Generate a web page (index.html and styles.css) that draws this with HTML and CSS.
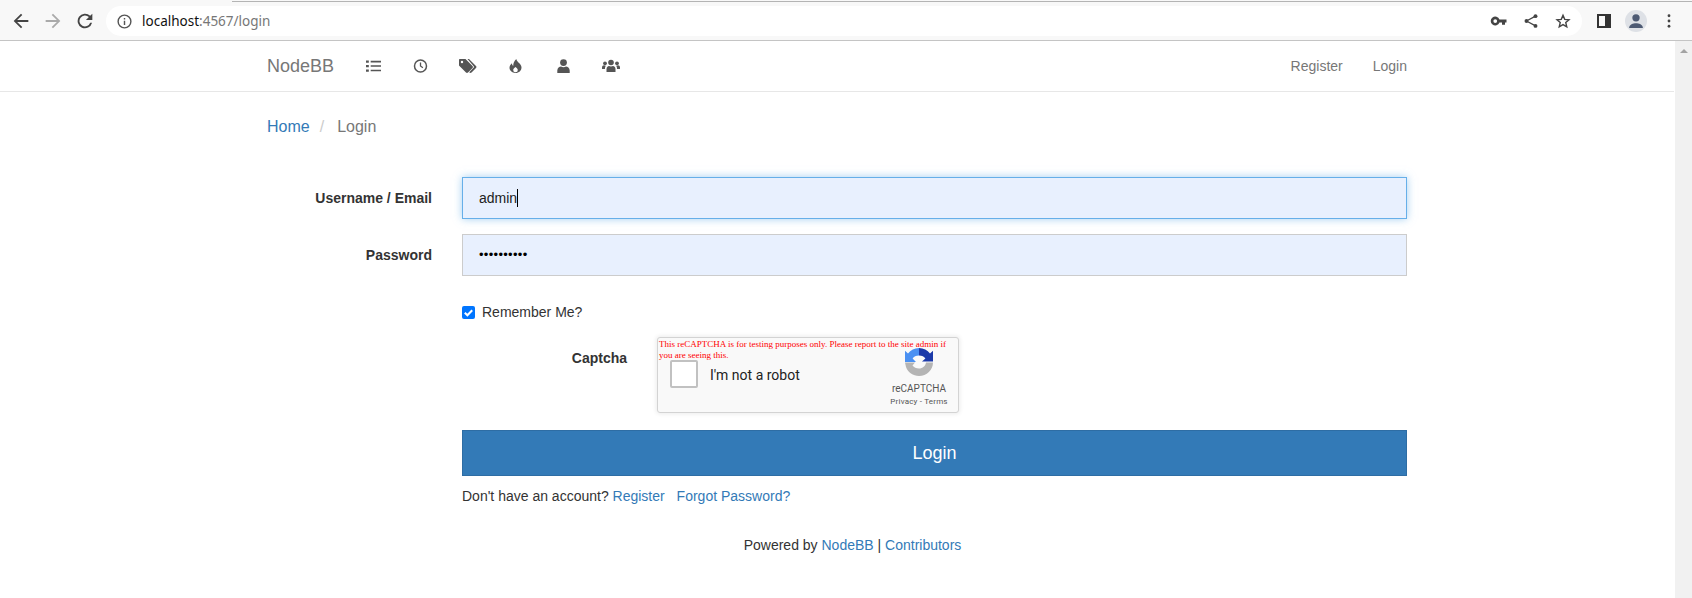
FILE: index.html
```html
<!DOCTYPE html>
<html lang="en">

<head>
    <meta charset="UTF-8">
    <title>Login | NodeBB</title>
    <link rel="stylesheet" href="styles.css">
</head>

<body>
    <!-- Browser toolbar -->
    <div class="chrome">
        <div class="tab-line"><span class="tab-active"></span><span class="tab-rest"></span></div>
        <div class="chrome-bar">
            <div class="chrome-nav">
                <svg class="chrome-icon" viewBox="0 0 24 24"><path d="M20 11H7.800l5.600-5.600L12 4l-8 8 8 8 1.400-1.400L7.800 13H20z" fill="#444"/></svg>
                <svg class="chrome-icon" viewBox="0 0 24 24"><path d="M4 11h12.200l-5.600-5.600L12 4l8 8-8 8-1.400-1.400 5.600-5.600H4z" fill="#aaa"/></svg>
                <svg class="chrome-icon" viewBox="0 0 24 24"><path d="M17.650 6.350A8 8 0 1 0 19.730 14h-2.080a6 6 0 1 1-1.410-6.240L13 11h7V4z" fill="#444"/></svg>
            </div>
            <div class="omnibox">
                <svg class="omni-info" viewBox="0 0 24 24"><circle cx="12" cy="12" r="9" fill="none" stroke="#555" stroke-width="2"/><path d="M11 11h2v6h-2zM11 7h2v2h-2z" fill="#555"/></svg>
                <span class="url"><b>localhost</b>:4567/login</span>
                <div class="omni-actions">
                    <svg class="omni-icon" viewBox="0 0 24 24"><path d="M12.600 10a6 6 0 1 0 0 4H16v3h4v-3h2v-4zM7 14.500a2.500 2.500 0 1 1 0-5 2.500 2.500 0 0 1 0 5z" fill="#444"/></svg>
                    <svg class="omni-icon" viewBox="0 0 24 24"><path d="M18 5.500 6 12l12 6.500" fill="none" stroke="#444" stroke-width="1.600"/><circle cx="18" cy="5.500" r="2.600" fill="#444"/><circle cx="6" cy="12" r="2.600" fill="#444"/><circle cx="18" cy="18.500" r="2.600" fill="#444"/></svg>
                    <svg class="omni-icon" viewBox="0 0 24 24"><path d="M12 4.500l2.300 5.300 5.700.5-4.300 3.800 1.300 5.600L12 16.800l-5 2.900 1.300-5.600L4 10.300l5.700-.5z" fill="none" stroke="#444" stroke-width="1.900"/></svg>
                </div>
            </div>
            <div class="chrome-end">
                <svg class="panel-icon" viewBox="0 0 14 14"><path d="M0 0h14v14H0zM2 2v10h6V2z" fill="#333" fill-rule="evenodd"/></svg>
                <div class="avatar">
                    <svg viewBox="0 0 24 24"><circle cx="12" cy="8.500" r="4" fill="#4d5a73"/><path d="M4.500 19.500c0-3.600 4.500-5 7.500-5s7.500 1.400 7.500 5z" fill="#4d5a73"/></svg>
                </div>
                <svg class="menu-icon" viewBox="0 0 4 16"><circle cx="2" cy="2" r="1.600" fill="#444"/><circle cx="2" cy="8" r="1.600" fill="#444"/><circle cx="2" cy="14" r="1.600" fill="#444"/></svg>
            </div>
        </div>
    </div>

    <div class="viewport">
        <div class="page">
            <nav class="navbar">
                <div class="container nav-inner">
                    <a class="brand" href="#">NodeBB</a>
                    <ul class="nav-icons">
                        <li><svg viewBox="0 0 16 14"><path d="M0 1h3v2.400H0zM0 5.800h3v2.400H0zM0 10.600h3V13H0zM5 1.400h11v1.800H5zM5 6.100h11v1.800H5zM5 10.900h11v1.800H5z" fill="#555"/></svg></li>
                        <li><svg viewBox="0 0 14 14"><circle cx="7" cy="7" r="6" fill="none" stroke="#555" stroke-width="1.500"/><path d="M7 3.500V7l2.400 1.700" fill="none" stroke="#555" stroke-width="1.300"/></svg></li>
                        <li><svg class="icon-wide" viewBox="0 0 18 14"><path fill-rule="evenodd" d="M0 1v5.500L7 13.500c.6.6 1.400.6 2 0L13.500 9c.6-.6.6-1.400 0-2L6.500 0H1C.4 0 0 .4 0 1zM3 1.800a1.200 1.200 0 1 1 0 2.400 1.200 1.200 0 0 1 0-2.400z" fill="#555"/><path d="M8.500 0H10l7 7c.6.6.6 1.400 0 2l-4.500 4.500c-.6.6-1.400.6-2 0l-.3-.3 4.300-4.400c.6-.6.6-1.200 0-1.800z" fill="#555"/></svg></li>
                        <li><svg viewBox="0 0 12 14"><path fill-rule="evenodd" d="M6.800 0C7 3 12 4.500 12 8.500 12 11.500 9.500 14 6 14S0 11.500 0 8.800C0 6.800 1 5.300 2.500 4.200c0 1.300.5 2.300 1.300 2.600C3.500 4.500 4.800 1.800 6.800 0zM6 8c-1.300 1.200-2.300 2-2.300 3a2.300 2.300 0 0 0 4.600 0C8.300 10 7.300 9.200 6 8z" fill="#555"/></svg></li>
                        <li><svg viewBox="0 0 14 14"><circle cx="7" cy="3.600" r="3.400" fill="#555"/><path d="M.8 14v-2.500C.8 9 3 7.500 4.500 7.500c.8.500 1.600.7 2.500.7s1.700-.2 2.500-.7c1.500 0 3.700 1.500 3.700 4V14z" fill="#555"/></svg></li>
                        <li><svg class="icon-wide" viewBox="0 0 18 13"><circle cx="9" cy="3" r="2.800" fill="#555"/><circle cx="3" cy="3.800" r="1.900" fill="#555"/><circle cx="15" cy="3.800" r="1.900" fill="#555"/><path d="M4.500 12.500V9.500C4.500 7.500 6 6.500 7 6.500c.6.300 1.300.4 2 .4s1.400-.1 2-.4c1 0 2.500 1 2.500 3v3zM0 9.500V8c0-1.300 1-2.200 2-2.200.5.300 1 .4 1.800.4-.6.800-.9 1.900-.9 3.300zM18 9.500V8c0-1.300-1-2.200-2-2.200-.5.300-1 .4-1.800.4.600.8.900 1.900.9 3.300z" fill="#555"/></svg></li>
                    </ul>
                    <ul class="nav-right">
                        <li><a href="#">Register</a></li>
                        <li><a href="#">Login</a></li>
                    </ul>
                </div>
            </nav>

            <div class="container">
                <ol class="breadcrumb">
                    <li><a href="#">Home</a></li>
                    <li class="sep">/</li>
                    <li class="active">Login</li>
                </ol>

                <form class="login-form">
                    <div class="form-row">
                        <label class="form-label">Username / Email</label>
                        <div class="form-input focused">admin<span class="caret"></span></div>
                    </div>
                    <div class="form-row">
                        <label class="form-label">Password</label>
                        <div class="form-input dots">••••••••••</div>
                    </div>
                    <div class="remember">
                        <span class="check"><svg viewBox="0 0 14 14"><path d="M3 7.200l2.800 2.800L11 4.500" fill="none" stroke="#fff" stroke-width="2.200"/></svg></span>
                        Remember Me?
                    </div>
                    <div class="captcha-row">
                        <label class="captcha-label">Captcha</label>
                        <div class="recaptcha">
                            <p class="recaptcha-warn">This reCAPTCHA is for testing purposes only. Please report to the site admin if you are seeing this.</p>
                            <span class="recaptcha-box"></span>
                            <span class="recaptcha-text">I'm not a robot</span>
                            <div class="recaptcha-brand">
                                <svg viewBox="0 0 28 28">
                                    <path d="M28 14.500C28 22 21.700 28 14 28 8 28 3 24.500 1 19L0 14.500h10l-2.500 3c1.500 2 3.800 3 6.500 3 3.600 0 6.500-2.500 7-6z" fill="#b4b4b4"/>
                                    <path d="M14 0C9.500 0 5.500 2.200 3 5.600L0 2.700V14h11L7.600 10.600C8.800 8.800 11 7.500 14 7.500z" fill="#4a90f2"/>
                                    <path d="M14 0c4.500 0 8.500 2.200 11 5.600l3-2.900v10.800H17l3.400-2.900C19.200 8.800 17 7.500 14 7.500z" fill="#1c3aa9"/>
                                </svg>
                                <span class="brand-name">reCAPTCHA</span>
                                <span class="brand-links">Privacy - Terms</span>
                            </div>
                        </div>
                    </div>
                    <button class="login-btn" type="button">Login</button>
                    <p class="account-links">Don't have an account? <a href="#">Register</a> <a class="forgot" href="#">Forgot Password?</a></p>
                </form>

                <p class="powered">Powered by <a href="#">NodeBB</a> | <a href="#">Contributors</a></p>
            </div>
        </div>

        <div class="scrollbar"><span class="scroll-up"></span></div>
    </div>
</body>

</html>
```

FILE: styles.css
```css
* {
    box-sizing: border-box;
}

html, body {
    height: 100%;
}

body {
    margin: 0;
    display: flex;
    flex-direction: column;
    overflow: hidden;
    background-color: #fff;
    color: #333;
    font-family: "Liberation Sans", Arial, sans-serif;
    font-size: 14px;
    line-height: 20px;
}

a {
    color: #337ab7;
    text-decoration: none;
}

ul, ol {
    list-style: none;
    margin: 0;
    padding: 0;
}

p {
    margin: 0;
}

/* Browser toolbar */
.chrome {
    flex: none;
    height: 41px;
    display: flex;
    flex-direction: column;
    background-color: #f8f8f8;
    border-bottom: 1px solid #c4c4c4;
}

.tab-line {
    flex: none;
    height: 2px;
    display: flex;
}

.tab-active {
    width: 232px;
}

.tab-rest {
    flex: 1;
    border-bottom: 1px solid #b4b4b4;
}

.chrome-bar {
    flex: 1;
    display: flex;
    align-items: center;
}

.chrome-nav {
    display: flex;
    gap: 10px;
    margin-left: 10px;
}

.chrome-icon {
    width: 22px;
    height: 22px;
}

.omnibox {
    width: 1476px;
    height: 30px;
    margin-left: 10px;
    padding: 0 10px;
    display: flex;
    align-items: center;
    background-color: #fff;
    border-radius: 15px;
}

.omni-info {
    width: 17px;
    height: 17px;
}

.url {
    margin-left: 9px;
    font-family: "Noto Sans", sans-serif;
    font-size: 13.5px;
    color: #777;
}

.url b {
    font-weight: 400;
    color: #111;
}

.omni-actions {
    margin-left: auto;
    display: flex;
    gap: 14px;
}

.omni-icon {
    width: 18px;
    height: 18px;
}

.chrome-end {
    display: flex;
    align-items: center;
    margin-left: 15px;
}

.panel-icon {
    width: 14px;
    height: 14px;
}

.avatar {
    width: 22px;
    height: 22px;
    margin-left: 14px;
    border-radius: 50%;
    background-color: #dee1e6;
}

.avatar svg {
    display: block;
    width: 22px;
    height: 22px;
}

.menu-icon {
    width: 4px;
    height: 14px;
    margin-left: 20px;
}

/* Page */
.viewport {
    flex: 1;
    display: flex;
    min-height: 0;
}

.page {
    flex: 1;
    padding-right: 1px;
}

.scrollbar {
    flex: none;
    width: 17px;
    background-color: #f1f1f1;
    display: flex;
    justify-content: center;
    padding-top: 8px;
}

.scroll-up {
    width: 0;
    height: 0;
    border-left: 4px solid transparent;
    border-right: 4px solid transparent;
    border-bottom: 4px solid #a3a3a3;
}

.container {
    width: 1170px;
    margin: 0 auto;
    padding: 0 15px;
}

.navbar {
    height: 51px;
    border-bottom: 1px solid #e7e7e7;
}

.nav-inner {
    height: 50px;
    display: flex;
    align-items: center;
}

.brand {
    font-size: 18px;
    color: #777;
}

.nav-icons {
    display: flex;
    align-items: center;
    gap: 31.5px;
    margin-left: 31px;
}

.nav-icons li {
    display: flex;
    width: 16px;
    justify-content: center;
}

.nav-icons svg {
    flex: none;
    width: 15px;
    height: 14px;
    display: block;
}

.nav-icons svg.icon-wide {
    width: 18px;
}

.nav-right {
    margin-left: auto;
    display: flex;
    gap: 30px;
}

.nav-right a {
    color: #777;
}

.breadcrumb {
    display: flex;
    padding: 8px 0;
    margin-top: 17px;
    font-size: 16px;
    line-height: 20px;
}

.sep {
    color: #ccc;
    margin: 0 10px;
}

.active {
    margin-left: 3px;
    color: #777;
}

.login-form {
    margin-top: 32px;
}

.form-row {
    display: flex;
    align-items: center;
    margin-bottom: 15px;
}

.form-label {
    width: 195px;
    padding-right: 30px;
    text-align: right;
    font-weight: 700;
}

.form-input {
    flex: 1;
    height: 42px;
    padding: 0 16px;
    display: flex;
    align-items: center;
    background-color: #e8f0fe;
    border: 1px solid #ccc;
    color: #222;
}

.focused {
    border-color: #66afe9;
    box-shadow: 0 0 8px rgba(102, 175, 233, .6);
}

.caret {
    width: 1px;
    height: 18px;
    background-color: #000;
}

.dots {
    font-size: 13px;
    color: #000;
    letter-spacing: .3px;
}

.remember {
    display: flex;
    align-items: center;
    margin: 26px 0 0 195px;
}

.check {
    width: 13px;
    height: 13px;
    margin-right: 7px;
    background-color: #0075ff;
    border-radius: 2px;
}

.check svg {
    display: block;
    width: 13px;
    height: 13px;
}

.captcha-row {
    display: flex;
    align-items: flex-start;
    margin-top: 15px;
}

.captcha-label {
    width: 375px;
    padding: 11px 15px 0 0;
    text-align: right;
    font-weight: 700;
}

.recaptcha {
    position: relative;
    width: 302px;
    height: 76px;
    background-color: #f9f9f9;
    border: 1px solid #d3d3d3;
    border-radius: 3px;
    box-shadow: 0 0 4px 1px rgba(0, 0, 0, .08);
    margin-left: 15px;
}

.recaptcha-warn {
    position: absolute;
    left: 1px;
    top: 1px;
    width: 298px;
    font-family: "Liberation Serif", serif;
    font-size: 9px;
    line-height: 10.5px;
    color: #f00;
}

.recaptcha-box {
    position: absolute;
    left: 12px;
    top: 22px;
    width: 28px;
    height: 28px;
    background-color: #fff;
    border: 2px solid #c1c1c1;
    border-radius: 2px;
}

.recaptcha-text {
    position: absolute;
    left: 52px;
    top: 29px;
    font-family: Roboto, sans-serif;
    font-size: 14px;
    line-height: 17px;
    color: #222;
}

.recaptcha-brand {
    position: absolute;
    right: 11px;
    top: 10px;
    width: 56px;
    display: flex;
    flex-direction: column;
    align-items: center;
    font-family: Roboto, sans-serif;
    color: #555;
}

.recaptcha-brand svg {
    width: 28px;
    height: 28px;
}

.brand-name {
    font-size: 10px;
    line-height: 12px;
    margin-top: 7px;
}

.brand-links {
    font-size: 8px;
    letter-spacing: .2px;
    line-height: 10px;
    margin-top: 2px;
    white-space: nowrap;
}

.login-btn {
    display: block;
    width: calc(100% - 195px);
    height: 46px;
    margin: 17px 0 0 195px;
    background-color: #337ab7;
    color: #fff;
    border: 1px solid #2e6da4;
    font-family: inherit;
    font-size: 18px;
}

.account-links {
    margin: 10px 0 0 195px;
}

.forgot {
    margin-left: 8px;
}

.powered {
    margin-top: 29px;
    padding-left: 31px;
    text-align: center;
}
```
